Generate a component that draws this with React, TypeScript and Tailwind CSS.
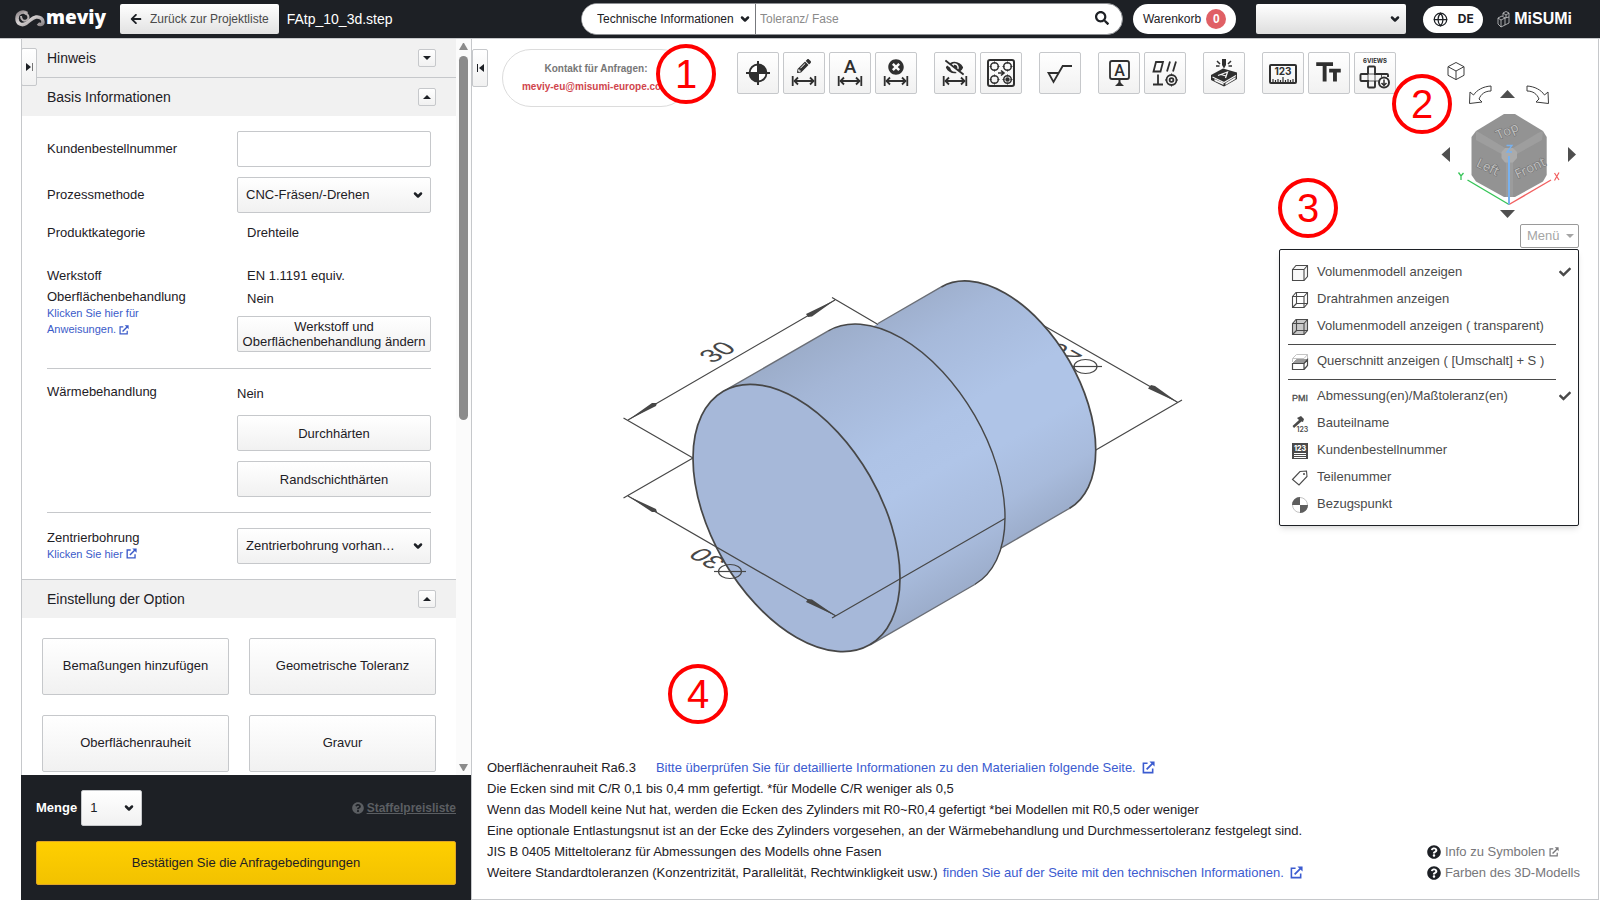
import type { ReactNode } from "react";
import { ChevronDown, Globe } from "lucide-react";
import {
  FaArrowLeft,
  FaCheck,
  FaEyeSlash,
  FaPencilAlt,
  FaQuestionCircle,
  FaSearch,
  FaTimesCircle,
} from "react-icons/fa";
import { MdTextFields } from "react-icons/md";

const buttonBase =
  "rounded-xs border border-[#c6c8cb] bg-linear-to-b from-white to-[#f1f1f1] text-[#1d2025] hover:to-[#e4e4e4]";

/* ---------- Form parts ---------- */

function Select({
  id,
  label,
  options,
  className,
  chevron = "right-[7px]",
}: {
  id: string;
  label?: string;
  options: string[];
  className: string;
  chevron?: string;
}) {
  return (
    <div className="relative flex">
      <select id={id} aria-label={label} className={`appearance-none outline-none ${className}`}>
        {options.map((option) => (
          <option key={option}>{option}</option>
        ))}
      </select>
      <ChevronDown
        aria-hidden="true"
        size={12}
        strokeWidth={5}
        className={`pointer-events-none absolute top-1/2 -translate-y-1/2 text-[#1d2025] ${chevron}`}
      />
    </div>
  );
}

function SectionHeading({ title, open }: { title: string; open: boolean }) {
  return (
    <div className="flex h-[38px] items-center justify-between bg-[#f1f1f1] pr-5 pl-[25px]">
      <h2 className="text-sm">{title}</h2>
      <button
        type="button"
        aria-label={title}
        aria-expanded={open}
        className={`flex size-[18px] items-center justify-center ${buttonBase}`}
      >
        <svg width="8" height="4" viewBox="0 0 8 4" aria-hidden="true">
          <path d={open ? "M0 4L4 0L8 4Z" : "M0 0L4 4L8 0Z"} fill="#1d2025" />
        </svg>
      </button>
    </div>
  );
}

function NewTabIcon({ size }: { size: number }) {
  return (
    <svg width={size} height={size} viewBox="0 0 14 14" fill="none" stroke="currentColor" aria-hidden="true" className="inline">
      <path d="M6 2.500H1.500V12.500H11.500V8" strokeWidth="1.700" />
      <path d="M5 9L12 2" strokeWidth="1.900" />
      <path d="M8 0.500H13.500V6Z" fill="currentColor" stroke="none" />
    </svg>
  );
}

/* ---------- Header ---------- */

function MeviyLogo() {
  return (
    <a href="#" aria-label="meviy" className="flex w-[90px] items-center gap-px text-white">
      <svg width="30" height="18" viewBox="0 0 30 18" fill="none" aria-hidden="true" className="shrink-0">
        <defs>
          <linearGradient id="loop" x1="0" y1="0" x2="1" y2="1">
            <stop offset="0" stopColor="#8d8689" />
            <stop offset="0.45" stopColor="#d9d5d6" />
            <stop offset="1" stopColor="#8f898b" />
          </linearGradient>
        </defs>
        <path
          d="M12 3.500C8 0.500 2 2.500 2 8.500C2 14 7 16 11 13.500C15 11 17 7.500 21 7C25 6.500 28 9 28 12C28 14.500 25 15.500 23 13.500"
          stroke="url(#loop)"
          strokeWidth="3.500"
        />
        <path d="M6 6C6 10 9 12 12 10C15 8 13 3 9 3" stroke="#b5afb1" strokeWidth="2" />
      </svg>
      <span className="-mt-[3px] font-['Open_Sans',sans-serif] text-[19px] leading-none font-extrabold">meviy</span>
    </a>
  );
}

function MisumiLogo() {
  return (
    <a href="#" aria-label="MiSUMi" className="flex items-center gap-1 text-white">
      <svg width="13" height="17" viewBox="0 0 13 17" fill="none" stroke="#c9cacc" strokeWidth="0.800" aria-hidden="true">
        <path d="M1 7L5 5L8 7L4 9ZM1 7V13L4 16V9M4 16L12 12V6L8 7V14" />
        <path d="M6 5V2L9 0.500L12 2V6M6 2L9 4L12 2M9 4V7" />
      </svg>
      <span className="text-base leading-none font-black">MiSUMi</span>
    </a>
  );
}

function Header() {
  return (
    <header className="flex h-[39px] shrink-0 items-center border-b border-[#c6c8cb] bg-[#1d2025] pr-[28px] pl-[15px] text-xs">
      <MeviyLogo />
      <button
        type="button"
        className="ml-[15px] flex h-[30px] items-center gap-2 rounded-xs bg-linear-to-b from-white to-[#e2e2e2] px-[10px] text-[#4a4a4a]"
      >
        <FaArrowLeft aria-hidden="true" size={12} className="text-[#1d2025]" />
        Zurück zur Projektliste
      </button>
      <span className="ml-2 text-sm text-white">FAtp_10_3d.step</span>

      <div className="ml-auto flex items-center">
        <form role="search" className="flex h-8 w-[542px] overflow-hidden rounded-full border border-[#8d8f93] bg-white">
          <div className="flex w-[174px] border-r border-[#77797d]">
            <Select
              id="search-scope"
              label="Suchbereich"
              options={["Technische Informationen"]}
              className="w-[173px] bg-white pl-[15px] text-[#1d2025]"
              chevron="right-1"
            />
          </div>
          <input
            type="search"
            aria-label="Suche"
            placeholder="Toleranz/ Fase"
            className="min-w-0 flex-1 px-1 outline-none placeholder:text-[#8a8a8a]"
          />
          <button type="submit" aria-label="Suchen" className="mr-[13px] mb-[3px] text-[#1d2025]">
            <FaSearch size={14} />
          </button>
        </form>
        <a href="#" className="ml-[10px] flex h-[30px] items-center gap-[5px] rounded-full bg-white px-[10px] text-[#1d2025]">
          Warenkorb
          <span className="flex size-5 items-center justify-center rounded-full bg-[#e06065] font-bold text-white">
            0
          </span>
        </a>
        <div className="ml-5">
          <Select
            id="account"
            label="Konto"
            options={[""]}
            className="h-[30px] w-[150px] rounded-xs bg-linear-to-b from-white to-[#dedede]"
            chevron="right-[5px]"
          />
        </div>
        <button
          type="button"
          className="ml-[17px] flex h-[27px] w-[60px] items-center justify-center gap-[10px] rounded-full bg-white font-[Inter,sans-serif] text-xs font-bold text-[#1d2025]"
        >
          <Globe aria-hidden="true" size={15} strokeWidth={2} />
          DE
        </button>
        <div className="ml-[14px]">
          <MisumiLogo />
        </div>
      </div>
    </header>
  );
}

/* ---------- Sidebar ---------- */

const fieldSelect = `h-9 w-[194px] truncate pr-6 pl-2 ${buttonBase}`;

function BasicInformation() {
  return (
    <div className="px-[25px] pt-[15px] pb-[15px]">
      <div className="flex items-center justify-between">
        <label htmlFor="order-number">Kundenbestellnummer</label>
        <input id="order-number" type="text" className="h-9 w-[194px] rounded-xs border border-[#c6c8cb] px-2" />
      </div>
      <div className="mt-[10px] flex items-center justify-between">
        <label htmlFor="process">Prozessmethode</label>
        <Select id="process" options={["CNC-Fräsen/-Drehen"]} className={fieldSelect} />
      </div>
      <div className="flex h-10 items-center justify-between">
        <span>Produktkategorie</span>
        <span className="w-[184px]">Drehteile</span>
      </div>

      <div className="mt-[11px] flex justify-between border-b border-[#c6c8cb] pb-[15px]">
        <div className="pt-px leading-[21px]">
          <p>Werkstoff</p>
          <p>Oberflächenbehandlung</p>
          <a href="#" className="-mt-[2px] block w-[110px] text-[11px] leading-4 text-[#3b5bc9]">
            Klicken Sie hier für Anweisungen. <NewTabIcon size={10} />
          </a>
        </div>
        <div className="w-[194px] leading-[23px]">
          <p className="pl-[10px]">EN 1.1191 equiv.</p>
          <p className="pl-[10px]">Nein</p>
          <button type="button" className={`mt-[6px] h-9 w-full text-[13px] leading-[15px] ${buttonBase}`}>
            Werkstoff und Oberflächenbehandlung ändern
          </button>
        </div>
      </div>

      <div className="flex justify-between border-b border-[#c6c8cb] pt-[13px] pb-[15px]">
        <span className="leading-5">Wärmebehandlung</span>
        <div className="flex w-[194px] flex-col gap-[10px] leading-[23px]">
          <span>Nein</span>
          <button type="button" className={`h-9 ${buttonBase}`}>
            Durchhärten
          </button>
          <button type="button" className={`h-9 ${buttonBase}`}>
            Randschichthärten
          </button>
        </div>
      </div>

      <div className="flex justify-between pt-[15px]">
        <div>
          <label htmlFor="center-hole" className="block leading-5">
            Zentrierbohrung
          </label>
          <a href="#" className="flex items-center gap-[3px] text-[11px] leading-[10px] text-[#3b5bc9]">
            Klicken Sie hier <NewTabIcon size={11} />
          </a>
        </div>
        <Select id="center-hole" options={["Zentrierbohrung vorhanden"]} className={`text-ellipsis ${fieldSelect} pr-[34px]`} />
      </div>
    </div>
  );
}

const optionButtons = ["Bemaßungen hinzufügen", "Geometrische Toleranz", "Oberflächenrauheit", "Gravur"];

function Sidebar() {
  return (
    <aside className="relative ml-[21px] flex w-[450px] shrink-0 flex-col text-[13px] text-[#1d2025]">
      <div className="flex min-h-0 flex-1">
        <div className="min-w-0 flex-1 overflow-hidden border-l border-[#c6c8cb]">
          <SectionHeading title="Hinweis" open={false} />
          <div className="border-t border-[#c6c8cb]">
            <SectionHeading title="Basis Informationen" open />
          </div>
          <BasicInformation />
          <div className="border-t border-[#c6c8cb]">
            <SectionHeading title="Einstellung der Option" open />
          </div>
          <div className="grid grid-cols-2 gap-5 p-5">
            {optionButtons.map((label) => (
              <button key={label} type="button" className={`h-[57px] pb-px ${buttonBase}`}>
                {label}
              </button>
            ))}
          </div>
        </div>
        {/* Scrollbar */}
        <div aria-hidden="true" className="flex w-[15px] flex-col items-center bg-[#fbfbfb] pt-1 pb-1">
          <svg width="9" height="7" viewBox="0 0 9 7">
            <path d="M0 7L4 0H5L9 7Z" fill="#8b8b8b" />
          </svg>
          <div className="mt-[6px] h-1/2 w-[9px] rounded-full bg-[#8b8b8b]" />
          <svg width="9" height="7" viewBox="0 0 9 7" className="mt-auto">
            <path d="M0 0L4 7H5L9 0Z" fill="#8b8b8b" />
          </svg>
        </div>
      </div>

      <div className="bg-[#1d2025] p-[15px]">
        <div className="flex items-center">
          <label htmlFor="quantity" className="mr-1 font-bold text-white">
            Menge
          </label>
          <Select id="quantity" options={["1"]} className={`h-9 w-[61px] pl-2 ${buttonBase}`} />
          <a href="#" className="ml-auto flex items-center gap-[3px] text-xs font-bold text-[#5b5e62]">
            <FaQuestionCircle aria-hidden="true" size={12} />
            <span className="underline">Staffelpreisliste</span>
          </a>
        </div>
        <button
          type="button"
          className="mt-[15px] h-11 w-full rounded-xs border border-[#e0a526] bg-linear-to-b from-[#ffcf00] to-[#f2c200]"
        >
          Bestätigen Sie die Anfragebedingungen
        </button>
      </div>

      <button
        type="button"
        aria-label="Seitenleiste einklappen"
        className={`absolute top-[9px] left-0 flex h-[38px] w-4 items-center justify-center ${buttonBase}`}
      >
        <svg width="7" height="8" viewBox="0 0 7 8" aria-hidden="true">
          <path d="M0 0L5 4L0 8Z" fill="#1d2025" />
          <path d="M6.500 0V8" stroke="#777" />
        </svg>
      </button>
    </aside>
  );
}

/* ---------- Toolbar ---------- */

const ink = "#2f2f2f";

function WidthArrow() {
  return (
    <g stroke={ink} fill="none" strokeWidth="1.800">
      <path d="M9.700 24V34M32.300 24V34M11 29H31" />
      <path d="M15 25.500L11.500 29L15 32.500M27 25.500L30.500 29L27 32.500" />
    </g>
  );
}

function HoleMark({ cx, cy, filled }: { cx: number; cy: number; filled?: boolean }) {
  return (
    <g stroke={ink} fill="none" strokeWidth="1.500">
      <circle cx={cx} cy={cy} r="3.800" />
      <path
        d={`M${cx - 5} ${cy}h2M${cx + 3} ${cy}h2M${cx} ${cy - 5}v2M${cx} ${cy + 3}v2`}
        strokeWidth="1"
      />
      {filled && <circle cx={cx} cy={cy} r="1.500" fill={ink} />}
    </g>
  );
}

const toolGroups: { label: string; icon: ReactNode }[][] = [
  [
    {
      label: "Bezugspunkt setzen",
      icon: (
        <>
          <circle cx="21" cy="21" r="8.500" fill="white" stroke={ink} strokeWidth="1.800" />
          <path d="M21 12.500A8.500 8.500 0 0 1 29.500 21H21ZM21 21V29.500A8.500 8.500 0 0 1 12.500 21Z" fill={ink} />
          <path d="M21 9V33M9 21H33" stroke={ink} strokeWidth="2" />
        </>
      ),
    },
    {
      label: "Maß bearbeiten",
      icon: (
        <>
          <FaPencilAlt x={14} y={7} size={14} color={ink} />
          <WidthArrow />
        </>
      ),
    },
    {
      label: "Maßtext",
      icon: (
        <>
          <text x="21" y="20.500" textAnchor="middle" fontFamily="Roboto" fontWeight="500" fontSize="19" fill={ink}>
            A
          </text>
          <WidthArrow />
        </>
      ),
    },
    {
      label: "Maß löschen",
      icon: (
        <>
          <FaTimesCircle x={13} y={7} size={16} color={ink} />
          <WidthArrow />
        </>
      ),
    },
  ],
  [
    {
      label: "Maße ausblenden",
      icon: (
        <>
          <FaEyeSlash x={11} y={6} size={19} color={ink} />
          <WidthArrow />
        </>
      ),
    },
    {
      label: "Bohrungsgruppe",
      icon: (
        <>
          <rect x="8" y="8" width="26" height="26" rx="2" fill="none" stroke={ink} strokeWidth="2" />
          <HoleMark cx={14.5} cy={14.5} />
          <HoleMark cx={27.5} cy={14.5} />
          <HoleMark cx={14.5} cy={27.5} />
          <HoleMark cx={27.5} cy={27.5} filled />
          <path d="M18 21H23.500M21 18.500L24 21L21 23.500" fill="none" stroke={ink} strokeWidth="1.600" />
        </>
      ),
    },
  ],
  [
    {
      label: "Oberflächenzeichen",
      icon: <path d="M19.500 21H9.500L14.500 30L23.700 14H33" fill="none" stroke={ink} strokeWidth="1.800" />,
    },
  ],
  [
    {
      label: "Bezugssymbol",
      icon: (
        <>
          <rect x="12" y="9" width="19" height="18" rx="2" fill="none" stroke={ink} strokeWidth="1.800" />
          <text x="21.500" y="23.500" textAnchor="middle" fontFamily="Roboto" fontWeight="500" fontSize="16" fill={ink}>
            A
          </text>
          <path d="M21.500 27V31" stroke={ink} strokeWidth="2" />
          <path d="M17 34L21.500 29.500L26 34Z" fill={ink} />
        </>
      ),
    },
    {
      label: "Form- und Lagetoleranz",
      icon: (
        <g fill="none" stroke={ink} strokeWidth="1.800">
          <path d="M12 10H19L16.500 19.500H9.500Z" />
          <path d="M23 19.500L26 9.500M29 19.500L32 9.500" />
          <path d="M14 22.500V32.500M9 32.500H19" />
          <circle cx="27.500" cy="28" r="5" />
          <circle cx="27.500" cy="28" r="1.900" />
          <path d="M21 28H23M32 28H34M27.500 21.500V24M27.500 32V34.500" strokeWidth="1" />
        </g>
      ),
    },
  ],
  [
    {
      label: "Gravur",
      icon: (
        <>
          <path d="M8 23L20 16.500L34 20.500V27L21 34.500L8 28Z" fill={ink} />
          <path d="M9.500 25L21 30.500L33 23.500" fill="none" stroke="#f4f4f4" strokeWidth="1.200" />
          <path d="M11.500 29L20.500 33V31L11.500 27ZM22.500 33L32.500 27V25L22.500 31Z" fill="#f4f4f4" />
          <path d="M15 23.500L24.500 20L22.500 26M18 22.500L23 24" fill="none" stroke="#f4f4f4" strokeWidth="1.300" />
          <path d="M19 7H23V13L21 16.500L19 13Z" fill={ink} />
          <path d="M14 9L17 12M13 14H16.500M28 9L25 12M29 14H25.500" stroke={ink} strokeWidth="1.500" />
        </>
      ),
    },
  ],
  [
    {
      label: "Maßstab",
      icon: (
        <>
          <rect x="8" y="13" width="26" height="18" rx="1" fill="none" stroke={ink} strokeWidth="2" />
          <text x="21" y="23" textAnchor="middle" fontFamily="Inter" fontWeight="700" fontSize="10" fill={ink}>
            123
          </text>
          <path
            d="M11 30V27M13.500 30V28M16 30V27M18.500 30V28M21 30V25M23.500 30V28M26 30V27M28.500 30V28M31 30V27"
            stroke={ink}
            strokeWidth="1.200"
          />
        </>
      ),
    },
    { label: "Textgröße", icon: <MdTextFields x={5} y={5} size={31} color={ink} /> },
    {
      label: "6 Ansichten",
      icon: (
        <>
          <text x="21" y="11" textAnchor="middle" fontFamily="Inter" fontWeight="700" fontSize="6" fill={ink}>
            6VIEWS
          </text>
          <g fill="none" stroke={ink} strokeWidth="1.900">
            <path d="M14 22V15.500Q14 14.500 15 14.500H20Q21 14.500 21 15.500V22H33Q34 22 34 23V25M21 29V34.500Q21 35.500 20 35.500H15Q14 35.500 14 34.500V29H7.500Q6.500 29 6.500 28V23Q6.500 22 7.500 22H14" />
            <path d="M14 22V29M21 22V29M14 22H21M14 29H25M27.500 22V25" strokeWidth="0.800" />
          </g>
          <circle cx="30" cy="30.500" r="5" fill="white" stroke={ink} strokeWidth="2" />
          <path d="M30 27.500V33M27.500 31L30 33.500L32.500 31" fill="none" stroke={ink} strokeWidth="1.500" />
        </>
      ),
    },
  ],
];

function Toolbar() {
  return (
    <div role="toolbar" aria-label="Werkzeuge" className="mt-[13px] ml-[47px] flex gap-[17px]">
      {toolGroups.map((group) => (
        <div key={group[0].label} className="flex gap-1">
          {group.map((tool) => (
            <button key={tool.label} type="button" aria-label={tool.label} className={`size-[42px] ${buttonBase}`}>
              <svg width="42" height="42" viewBox="0 0 42 42" aria-hidden="true" className="-m-px">
                {tool.icon}
              </svg>
            </button>
          ))}
        </div>
      ))}
    </div>
  );
}

/* ---------- View cube ---------- */

function ViewCube() {
  const curved = "M51 26V31C45 31 41 34 39 39L42 42L29.500 43.500L30 32L33.500 35C37 30 43 26.500 51 26Z";
  return (
    <svg width="139" height="160" viewBox="0 0 139 160" role="img" aria-label="Ansichtswürfel">
      <g fill="none" stroke="#3c3c3c">
        <path d="M16 2.500L24 6.700V15.300L16 19.600L8 15.300V6.700ZM8 6.700L16 11L24 6.700M16 11V19.600" />
        <path d={curved} />
        <path d={curved} transform="matrix(-1 0 0 1 138 0)" />
      </g>
      <path
        d="M67.500 30L75 38H60ZM1.500 94.500L10 87V102ZM136 94.500L128 87V102ZM67.500 158L60 150H75Z"
        fill="#4f4f4f"
      />
      <path
        d="M64 54H75L103 71L106.700 77V115L103 121.500L75 137H64L36 121.500L31.500 115V77L36 71Z"
        fill="#939393"
      />
      <path
        d="M36 71L40 73L65 88L61.500 94L36 80ZM103 71L98 73L73 88L77 94L102 80Z"
        fill="#9e9e9e"
      />
      <path d="M66 102H73V137H66Z" fill="#9c9c9c" />
      <path d="M61.500 92L65 88H73L77 92V98L73 102.500H65L61.500 98Z" fill="#ababab" />
      <g
        fontFamily="Open Sans, sans-serif"
        fontSize="13"
        textAnchor="middle"
        fill="#c0c0c0"
        stroke="#757575"
        strokeWidth="1.200"
        paintOrder="stroke"
      >
        <text transform="translate(69 75) rotate(-24)">Top</text>
        <text transform="translate(46 111) rotate(26)">Left</text>
        <text transform="translate(92 112) rotate(-26)">Front</text>
      </g>
      <path d="M69 144.500L27.500 120" stroke="#36c558" strokeWidth="1.400" />
      <path d="M69 144.500L111 120" stroke="#f26060" strokeWidth="1.400" />
      <path d="M69 96V144.500" stroke="#78b1ee" strokeWidth="2" />
      <path d="M66.500 85.500H72L67 92H72" fill="none" stroke="#78b1ee" strokeWidth="1.300" />
      <path d="M18.500 112.500L21 116L23.500 113M21 116V120" fill="none" stroke="#36c558" strokeWidth="1.300" />
      <path d="M114.500 113L119 120M119 112.500L114.500 120.500" stroke="#f26060" strokeWidth="1.200" />
    </svg>
  );
}

/* ---------- Display menu ---------- */

const menuInk = "#4a4a4a";

function CubeGlyph({ fill = "none", wire }: { fill?: string; wire?: boolean }) {
  return (
    <g fill={fill} stroke={menuInk} strokeWidth="1.100">
      <path d="M0.500 4.500L4 0.500H15.500V11.500L12 15.500H0.500Z" />
      <path d="M0.500 4.500H12V15.500M12 4.500L15.500 0.500" fill="none" />
      {wire && <path d="M4.500 0.500V11.500H15.500M4.500 11.500L0.500 15.500" fill="none" />}
    </g>
  );
}

const menuGroups: { label: string; checked?: boolean; icon: ReactNode }[][] = [
  [
    { label: "Volumenmodell anzeigen", checked: true, icon: <CubeGlyph fill="#f8f8f8" /> },
    { label: "Drahtrahmen anzeigen", icon: <CubeGlyph wire /> },
    { label: "Volumenmodell anzeigen ( transparent)", icon: <CubeGlyph fill="#c9c9c9" wire /> },
  ],
  [
    {
      label: "Querschnitt anzeigen ( [Umschalt] + S )",
      icon: (
        <>
          <path d="M0.500 8V4.500L4.500 0.500H15.500V5M0.500 4.500H12L15.500 0.500" fill="none" stroke="#c4c4c4" />
          <path d="M0.500 9.500L4.500 5.500H15.500L12 9.500Z" fill="#9b9b9b" stroke="#9b9b9b" />
          <path
            d="M0.500 9.500H12V15.500H0.500ZM12 9.500L15.500 5.500V11.500L12 15.500"
            fill="none"
            stroke={menuInk}
            strokeWidth="1.200"
          />
        </>
      ),
    },
  ],
  [
    {
      label: "Abmessung(en)/Maßtoleranz(en)",
      checked: true,
      icon: (
        <text x="8" y="12" textAnchor="middle" fontSize="9" fill={menuInk} stroke={menuInk} strokeWidth="0.300">
          PMI
        </text>
      ),
    },
    {
      label: "Bauteilname",
      icon: (
        <>
          <path d="M5 2L9 0L12 3L11 6L9.500 5.500L2 12L0.500 10L7 4Z" fill={menuInk} />
          <text x="4.500" y="16" fontSize="7" fontFamily="Inter" fontWeight="600" fill={menuInk}>
            123
          </text>
        </>
      ),
    },
    {
      label: "Kundenbestellnummer",
      icon: (
        <>
          <rect width="16" height="16" fill={menuInk} />
          <text x="8" y="8" textAnchor="middle" fontSize="7" fontFamily="Inter" fontWeight="800" fill="white">
            123
          </text>
          <path d="M2 10.500H14M2 12.500H14M2 14.500H14" stroke="white" />
        </>
      ),
    },
    {
      label: "Teilenummer",
      icon: (
        <>
          <path d="M0.500 9.500L8 1.500L14.500 1L15 6.500L7 15Z" fill="none" stroke={menuInk} strokeWidth="1.100" />
          <circle cx="12" cy="4" r="1" fill={menuInk} />
        </>
      ),
    },
    {
      label: "Bezugspunkt",
      icon: (
        <>
          <circle cx="8" cy="8" r="7.500" fill="white" stroke="#c4c4c4" />
          <path d="M8 8V0A8 8 0 0 0 0 8ZM8 8H16A8 8 0 0 1 8 16Z" fill="#5e5e5e" />
        </>
      ),
    },
  ],
];

function DisplayMenu() {
  return (
    <div className="relative mt-1 flex justify-end">
      <button
        type="button"
        aria-haspopup="menu"
        aria-expanded="true"
        className="flex h-6 w-[59px] items-center gap-[6px] rounded-xs border border-[#9a9a9a] bg-white pl-[6px] text-[13px] text-[#a5a5a5]"
      >
        Menü
        <svg width="8" height="4" viewBox="0 0 8 4" aria-hidden="true">
          <path d="M0 0L4 4L8 0Z" fill="#a5a5a5" />
        </svg>
      </button>
      <div
        role="menu"
        className="absolute top-[25px] right-0 w-[300px] rounded-xs border border-[#1d2025] bg-white py-2 shadow-md"
      >
        {menuGroups.map((group, index) => (
          <div key={group[0].label}>
            {index > 0 && <div role="separator" className="mt-[5px] mr-[22px] mb-[2px] ml-2 h-px bg-[#4a4a4a]" />}
            {group.map((item) => (
              <button
                key={item.label}
                type="button"
                role="menuitemcheckbox"
                aria-checked={!!item.checked}
                className="flex h-[27px] w-full items-center gap-[9px] pr-[7px] pl-3 text-left text-[13px] text-[#4a4a4a] hover:bg-gray-100"
              >
                <svg width="16" height="16" viewBox="0 0 16 16" aria-hidden="true" className="mt-[3px] shrink-0 overflow-visible">
                  {item.icon}
                </svg>
                <span className="flex-1 whitespace-nowrap">{item.label}</span>
                {item.checked && <FaCheck aria-hidden="true" size={12} />}
              </button>
            ))}
          </div>
        ))}
      </div>
    </div>
  );
}

/* ---------- 3D model ---------- */

function Model() {
  return (
    <svg
      width="580"
      height="400"
      viewBox="610 265 580 400"
      role="img"
      aria-label="3D-Modell mit Bemaßung"
      className="absolute top-[226px] left-[138px]"
      fontFamily="Liberation Sans, sans-serif"
    >
      <defs>
        <linearGradient id="large" gradientUnits="userSpaceOnUse" x1="724" y1="391" x2="870" y2="645">
          <stop offset="0" stopColor="#9cadca" />
          <stop offset="0.150" stopColor="#a4b6d6" />
          <stop offset="0.450" stopColor="#aec3e6" />
          <stop offset="0.600" stopColor="#b0c5e8" />
          <stop offset="0.850" stopColor="#a8bbdc" />
          <stop offset="1" stopColor="#9cadcb" />
        </linearGradient>
        <linearGradient id="small" gradientUnits="userSpaceOnUse" x1="941" y1="287" x2="1069" y2="509">
          <stop offset="0" stopColor="#9fb0ce" />
          <stop offset="0.150" stopColor="#a6b9da" />
          <stop offset="0.450" stopColor="#afc4e7" />
          <stop offset="0.650" stopColor="#afc4e7" />
          <stop offset="0.850" stopColor="#a8bbdc" />
          <stop offset="1" stopColor="#9cadcb" />
        </linearGradient>
      </defs>

      {/* Rear diameter, partly covered by the body */}
      <g fill="none" stroke="#474747" strokeWidth="1.200">
        <path d="M1040 323.500L1178 402.500M1095 450.500L1182 400" />
        <ellipse cx="1085.500" cy="366.500" rx="11.500" ry="7" />
        <path d="M1070 366.500H1102" />
      </g>
      <path d="M1178 402.500L1148 388.500L1151 385L1155 386Z" fill="#474747" />
      <text transform="matrix(-0.866 -0.5 0.866 -0.5 1071 349)" fontSize="26" textAnchor="middle" fill="#474747">
        26
      </text>

      <g stroke="#474747" strokeWidth="1.400">
        <path
          d="M837.500 346.900L941.300 286.900A127.900 73.800 60 0 1 1069.300 508.500L965.500 568.500Z"
          fill="url(#small)"
          stroke="none"
        />
        <path d="M878 323.500L941.300 286.900M1000 548.600L1069.300 508.500" stroke="#6a6e76" fill="none" />
        <path d="M941.300 286.900A127.900 73.800 60 0 1 1069.300 508.500" fill="none" strokeWidth="1.700" />
        <path
          d="M723.800 391.200L828.300 330.900A146.400 84.500 60 0 1 974.700 584.500L870.200 644.800Z"
          fill="url(#large)"
          stroke="none"
        />
        <path d="M723.800 391.200L828.300 330.900M974.700 584.500L870.200 644.800" stroke="#6a6e76" fill="none" />
        <path d="M828.300 330.900A146.400 84.500 60 0 1 974.700 584.500" fill="none" />
        <ellipse rx="146.400" ry="84.500" transform="translate(796.500 518) rotate(60)" fill="#a6b8d9" strokeWidth="1.700" />
      </g>

      <g fill="none" stroke="#474747" strokeWidth="1.200">
        <path d="M628 420L835 300M623.500 418L693 458M832 297.500L878 324.500" />
        <path d="M628 496L836 616M623.500 498L693 458M832 618L1005 518.500" />
        <ellipse cx="730" cy="571.500" rx="11.500" ry="7" />
        <path d="M714 571.500H746" />
      </g>
      <path
        d="M628 420L652 403L657 403L656 406ZM835 300L806 314L808 317L812 316.500ZM628 496L652 512L657 512L656 509ZM836 616L806 602L808 599L812 599.500Z"
        fill="#474747"
      />
      <g fontSize="26" fill="#474747" textAnchor="middle">
        <text transform="matrix(0.866 -0.5 0.866 0.5 725 356.500)">30</text>
        <text transform="matrix(-0.866 -0.5 0.866 -0.5 715 554)">30</text>
      </g>
    </svg>
  );
}

/* ---------- Workspace ---------- */

function ExternalLink({ children }: { children: ReactNode }) {
  return (
    <a href="#" className="inline-flex items-center gap-[6px] text-[#3b5bd0]">
      {children}
      <NewTabIcon size={13} />
    </a>
  );
}

function Notes() {
  return (
    <div className="relative mt-auto flex items-end justify-between pr-[18px] pb-4 pl-[15px] text-[13px] leading-[21px]">
      <div className="text-[#1d2025]">
        <p className="flex gap-5">
          Oberflächenrauheit Ra6.3
          <ExternalLink>Bitte überprüfen Sie für detaillierte Informationen zu den Materialien folgende Seite.</ExternalLink>
        </p>
        <p>Die Ecken sind mit C/R 0,1 bis 0,4 mm gefertigt. *für Modelle C/R weniger als 0,5</p>
        <p>Wenn das Modell keine Nut hat, werden die Ecken des Zylinders mit R0~R0,4 gefertigt *bei Modellen mit R0,5 oder weniger</p>
        <p>
          Eine optionale Entlastungsnut ist an der Ecke des Zylinders vorgesehen, an der Wärmebehandlung und Durchmessertoleranz
          festgelegt sind.
        </p>
        <p>JIS B 0405 Mitteltoleranz für Abmessungen des Modells ohne Fasen</p>
        <p className="flex gap-[5px]">
          Weitere Standardtoleranzen (Konzentrizität, Parallelität, Rechtwinkligkeit usw.)
          <ExternalLink>finden Sie auf der Seite mit den technischen Informationen.</ExternalLink>
        </p>
      </div>
      <div className="text-[#77777a]">
        <a href="#" className="flex items-center gap-1">
          <FaQuestionCircle aria-hidden="true" size={14} className="text-[#1d2025]" />
          Info zu Symbolen
          <NewTabIcon size={10} />
        </a>
        <a href="#" className="flex items-center gap-1">
          <FaQuestionCircle aria-hidden="true" size={14} className="text-[#1d2025]" />
          Farben des 3D-Modells
        </a>
      </div>
    </div>
  );
}

function Callout({ number, className }: { number: number; className: string }) {
  return (
    <span
      className={`absolute flex size-[60px] items-center justify-center rounded-full border-4 border-[#ff0000] bg-white text-[40px] leading-none text-[#ff0000] ${className}`}
    >
      {number}
    </span>
  );
}

function Workspace() {
  return (
    <main className="relative mr-px flex min-w-0 flex-1 flex-col border-r border-b border-l border-[#c6c8cb]">
      <Model />
      <div className="relative flex items-start">
        <button
          type="button"
          aria-label="Seitenleiste ausklappen"
          className={`mt-[10px] flex h-[38px] w-4 items-center justify-center ${buttonBase}`}
        >
          <svg width="7" height="8" viewBox="0 0 7 8" aria-hidden="true">
            <path d="M7 0L2 4L7 8Z" fill="#1d2025" />
            <path d="M0.500 0V8" stroke="#1d2025" />
          </svg>
        </button>
        <div className="mt-[10px] ml-[14px] flex h-[58px] w-[188px] flex-col justify-center rounded-full border border-[#dcdcdc] text-center text-[10px] leading-[18px] font-bold whitespace-nowrap">
          <span className="text-[#777]">Kontakt für Anfragen:</span>
          <a href="#" className="text-[#d0454c]">
            meviy-eu@misumi-europe.com
          </a>
        </div>
        <Toolbar />
        <div className="mt-[21px] mr-[19px] ml-auto w-[139px]">
          <ViewCube />
          <DisplayMenu />
        </div>
      </div>
      <Notes />
      <Callout number={1} className="top-[5px] left-[184px]" />
      <Callout number={2} className="top-[35px] right-[146px]" />
      <Callout number={3} className="top-[139px] right-[260px]" />
      <Callout number={4} className="top-[625px] left-[196px]" />
    </main>
  );
}

export default function App() {
  return (
    <div className="flex h-screen flex-col bg-white font-['Liberation_Sans',Arial,sans-serif]">
      <Header />
      <div className="flex min-h-0 flex-1">
        <Sidebar />
        <Workspace />
      </div>
    </div>
  );
}
